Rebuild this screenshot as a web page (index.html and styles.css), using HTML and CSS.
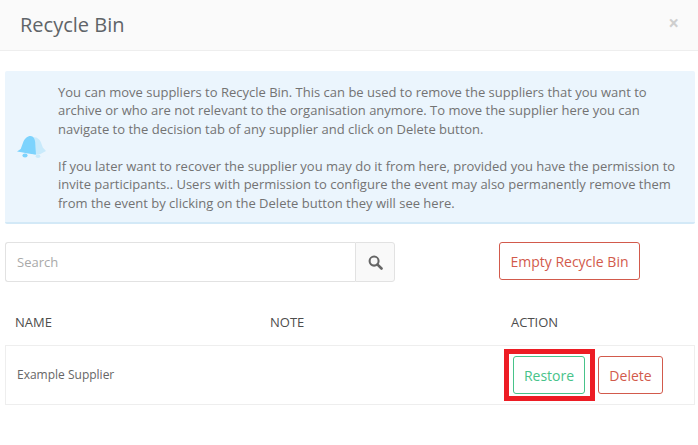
FILE: index.html
```html
<!DOCTYPE html>
<html lang="en">
<head>
<meta charset="utf-8">
<title>Recycle Bin</title>
<link rel="stylesheet" href="styles.css">
</head>
<body>
<div class="modal">
  <header class="modal-header">
    <h1 class="modal-title">Recycle Bin</h1>
    <span class="close">×</span>
  </header>
  <div class="modal-body">
    <section class="alert">
      <svg class="alert-icon" viewBox="0 0 30 23" width="30" height="23" aria-hidden="true">
        <path class="bell-back" d="M15 1.500c4-1 7.500 1 9 5l1.800 5 3.200 3.500-6 3.200-6.500.8c1.500-6 1-12-1.500-17.500z"/>
        <ellipse class="bell-back" cx="21" cy="20.300" rx="2.300" ry="1.700"/>
        <path class="bell-front" d="M0 15.500l3.700-2.500 2.400-6.500C7.500 2.500 10.500 0 13.500 0c3 0 4.500 3 4.700 6.500l.3 5.500.5 6.500C13 18 6 16.500 0 15.500z"/>
        <ellipse class="bell-front" cx="8" cy="19.500" rx="2.600" ry="1.900"/>
      </svg>
      <div class="alert-text">
        <p>You can move suppliers to Recycle Bin. This can be used to remove the suppliers that you want to archive or who are not relevant to the organisation anymore. To move the supplier here you can navigate to the decision tab of any supplier and click on Delete button.</p>
        <p>If you later want to recover the supplier you may do it from here, provided you have the permission to invite participants.. Users with permission to configure the event may also permanently remove them from the event by clicking on the Delete button they will see here.</p>
      </div>
    </section>
    <div class="toolbar">
      <div class="search">
        <input class="search-input" type="text" placeholder="Search">
        <span class="search-addon">
          <svg viewBox="0 0 16 16" width="15" height="15" aria-hidden="true">
            <circle cx="6.500" cy="6.500" r="4.800" class="search-glyph"/>
            <path d="M10.200 10.200l4.200 4.200" class="search-glyph handle"/>
          </svg>
        </span>
      </div>
      <button class="btn btn-danger btn-empty">Empty Recycle Bin</button>
    </div>
    <div class="table-head">
      <span class="col-name">NAME</span>
      <span class="col-note">NOTE</span>
      <span class="col-action">ACTION</span>
    </div>
    <div class="table-row">
      <span class="col-name supplier">Example Supplier</span>
      <span class="col-note"></span>
      <span class="col-action actions">
        <span class="highlight-wrap">
          <button class="btn btn-success">Restore</button>
          <span class="highlight"></span>
        </span>
        <button class="btn btn-danger">Delete</button>
      </span>
    </div>
  </div>
</div>
</body>
</html>
```
FILE: styles.css
```css
* { box-sizing: border-box; }
html, body { margin: 0; padding: 0; background: #fff; }
body {
  width: 698px;
  height: 445px;
  overflow: hidden;
  font-family: "Open Sans", "Noto Sans", sans-serif;
  font-size: 13px;
  line-height: 18.500px;
  color: #737373;
}
.modal-header {
  height: 51px;
  display: flex;
  align-items: center;
  justify-content: space-between;
  padding: 0 20px;
  background: #fafafa;
  border-bottom: 1px solid #eeeeee;
}
.modal-title {
  margin: 0;
  font-size: 20px;
  font-weight: 400;
  color: #5f6468;
}
.close {
  font-size: 19px;
  font-weight: 700;
  color: #cfcfcf;
  margin-right: -1px;
  margin-top: -3px;
}
.modal-body { padding: 20px 3px 0 5px; }
.alert {
  display: flex;
  align-items: center;
  height: 153px;
  padding: 2px 15px 0 12px;
  background: #ebf5fd;
  border-bottom: 2px solid #d3e9f7;
  border-radius: 2px;
}
.alert-icon { flex: none; width: 30px; height: 23px; margin-right: 11px; margin-top: -1px; }
.bell-front { fill: #7dd3fd; }
.bell-back { fill: #c9eafb; }
.alert-text p { margin: 0; }
.alert-text p + p { margin-top: 18.500px; }
.toolbar {
  display: flex;
  align-items: flex-start;
  margin-top: 18px;
}
.search {
  display: flex;
  width: 390px;
  height: 40px;
}
.search-input {
  flex: 1;
  min-width: 0;
  height: 40px;
  padding: 0 11px;
  border: 1px solid #e2e2e2;
  border-right: 0;
  border-radius: 3px 0 0 3px;
  background: #fff;
  font: 13px "Open Sans", sans-serif;
  color: #6f6f6f;
  outline: none;
}
.search-input::placeholder { color: #a9a9a9; opacity: 1; }
.search-addon {
  flex: none;
  display: flex;
  align-items: center;
  justify-content: center;
  width: 40px;
  background: #f9f9f9;
  border: 1px solid #e2e2e2;
  border-radius: 0 3px 3px 0;
}
.search-glyph { fill: none; stroke: #666; stroke-width: 2.200; }
.handle { stroke-width: 2.800; stroke-linecap: round; }
.btn {
  height: 38px;
  padding: 0;
  background: #fff;
  border: 1px solid;
  border-radius: 3px;
  font: 14px "Open Sans", sans-serif;
  white-space: nowrap;
}
.btn-danger { border-color: #d25a4c; color: #d25a4c; width: 65px; }
.btn-success { border-color: #47c38a; color: #47c38a; width: 72px; display: block; }
.btn-empty { width: 141px; margin-left: 104px; }
.table-head, .table-row { display: grid; }
.table-head {
  grid-template-columns: 255px 241px 1fr;
  margin-top: 31px;
  padding-left: 10px;
  height: 32px;
  font-size: 13px;
  color: #4d4d4d;
}
.table-row {
  grid-template-columns: 253px 243px 1fr;
  width: 690px;
  height: 60px;
  align-items: center;
  padding-left: 11px;
  border: 1px solid #eeeeee;
}
.supplier { font-size: 12px; color: #666; }
.actions { display: flex; align-items: center; gap: 13px; }
.highlight-wrap { position: relative; display: block; }
.highlight {
  position: absolute;
  left: -9px;
  right: -10px;
  top: -7px;
  bottom: -7px;
  border: 5px solid #ed1c24;
  pointer-events: none;
}
```
